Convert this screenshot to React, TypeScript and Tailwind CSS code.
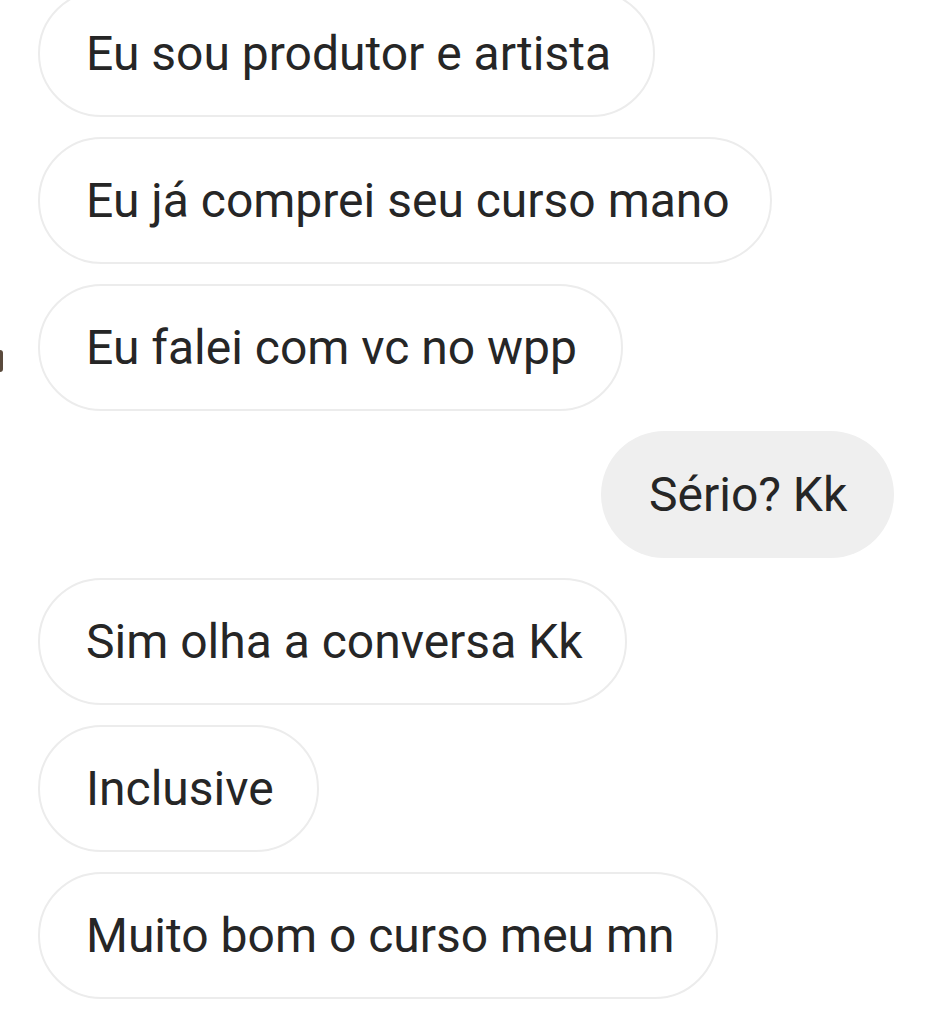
import React from "react";

type Msg = { text: string; w: string; mine?: boolean };

const msgs: Msg[] = [
  { text: "Eu sou produtor e artista", w: "w-[617px]" },
  { text: "Eu já comprei seu curso mano", w: "w-[734px]" },
  { text: "Eu falei com vc no wpp", w: "w-[585px]" },
  { text: "Sério? Kk", w: "w-[293px]", mine: true },
  { text: "Sim olha a conversa Kk", w: "w-[589px]" },
  { text: "Inclusive", w: "w-[281px]" },
  { text: "Muito bom o curso meu mn", w: "w-[680px]" },
];

export default function App() {
  return (
    <div className="relative w-[937px] h-[1009px] overflow-hidden bg-white">
      <div className="absolute left-0 top-[350px] w-[3px] h-[22px] rounded-r-full bg-[#5a4a3c]" />
      <div className="flex flex-col gap-[20px] mt-[-10px] pl-[38px] pr-[43px] font-['Roboto',sans-serif]">
        {msgs.map((m, i) => (
          <div key={i} className={`flex ${m.mine ? "justify-end" : "justify-start"}`}>
            <div
              className={
                m.mine
                  ? `${m.w} h-[127px] rounded-full bg-[#efefef] flex items-center pl-[48px] text-[48px] text-[#262626] whitespace-nowrap`
                  : `${m.w} h-[127px] rounded-full border-2 border-[#ececec] bg-white flex items-center pl-[46px] text-[48px] text-[#262626] whitespace-nowrap`
              }
            >
              {m.text}
            </div>
          </div>
        ))}
      </div>
    </div>
  );
}
